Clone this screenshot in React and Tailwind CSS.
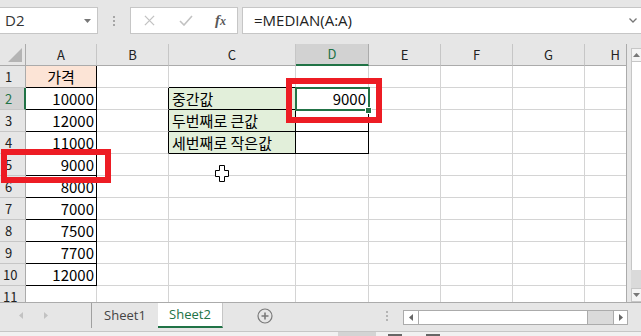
const COLS = [
    { id: 'A', w: 'w-[71px]' },
    { id: 'B', w: 'w-[72px]' },
    { id: 'C', w: 'w-[127px]' },
    { id: 'D', w: 'w-[73px]' },
    { id: 'E', w: 'w-[72px]' },
    { id: 'F', w: 'w-[72px]' },
    { id: 'G', w: 'w-[72px]' },
    { id: 'H', w: 'w-[42px]' },
];

const ROWS = [1, 2, 3, 4, 5, 6, 7, 8, 9, 10, 11];

const VALUES = {
    A1: '가격', A2: '10000', A3: '12000', A4: '11000', A5: '9000',
    A6: '8000', A7: '7000', A8: '7500', A9: '7700', A10: '12000',
    C2: '중간값', C3: '두번째로 큰값', C4: '세번째로 작은값', D2: '9000',
};

const BOXED = new Set(['A1', 'A2', 'A3', 'A4', 'A5', 'A6', 'A7', 'A8', 'A9', 'A10', 'C2', 'C3', 'C4', 'D2', 'D3', 'D4']);

const FILL = { A1: 'bg-[#fce4d6]', C2: 'bg-[#e2efda]', C3: 'bg-[#e2efda]', C4: 'bg-[#e2efda]' };

const UI_FONT = "font-['Open_Sans','Noto_Sans',sans-serif]";

function Cell({ col, nextCol, row }) {
    const id = col.id + row;
    const v = VALUES[id];
    const boxed = BOXED.has(id);
    const right = boxed || (nextCol && BOXED.has(nextCol.id + row)) ? 'border-r-black' : 'border-r-[#d4d4d4]';
    const bottom = boxed || BOXED.has(col.id + (row + 1)) ? 'border-b-black' : 'border-b-[#d4d4d4]';
    const isNum = v && /^\d+$/.test(v);
    const align = id === 'A1' ? 'justify-center' : isNum ? 'justify-end pr-[2px]' : 'justify-start pl-[3px]';
    return (
        <div className={`flex h-[22px] shrink-0 items-center whitespace-nowrap border-r border-b pt-[1px] text-[15px] text-black ${col.w} ${right} ${bottom} ${FILL[id] ?? 'bg-white'} ${align}`}>
            {v}
        </div>
    );
}

function Toolbar() {
    return (
        <div className="flex h-[44px] items-start pt-[7px]">
            <div className="flex h-[27px] w-[98px] items-center justify-between border border-l-0 border-[#c6c6c6] bg-white pl-[5px] pr-[6px]">
                <span className="text-[15px] text-[#333]">D2</span>
                <svg viewBox="0 0 7 4" className="h-[4px] w-[7px]"><path d="M0 0h7L3.5 4z" fill="#777" /></svg>
            </div>
            <div className="flex h-[27px] w-[32px] flex-col items-center justify-center gap-[2px]">
                <span className="h-[2px] w-[2px] bg-[#a6a6a6]" />
                <span className="h-[2px] w-[2px] bg-[#a6a6a6]" />
                <span className="h-[2px] w-[2px] bg-[#a6a6a6]" />
            </div>
            <div className="flex h-[27px] w-[108px] items-center border border-[#c6c6c6] bg-white">
                <svg viewBox="0 0 12 12" className="ml-[13px] h-[11px] w-[11px]"><path d="M1 1l10 10M11 1L1 11" stroke="#c2c2c2" strokeWidth="1.4" /></svg>
                <svg viewBox="0 0 14 11" className="ml-[24px] h-[11px] w-[14px]"><path d="M1 6l4 4 8-9" stroke="#c2c2c2" strokeWidth="1.6" fill="none" /></svg>
                <span className="ml-[22px] font-['Liberation_Serif',serif] text-[15px] font-bold italic leading-none text-[#595959]">f<span className="text-[12px]">x</span></span>
            </div>
            <div className="ml-[4px] flex h-[27px] flex-1 items-center justify-between border border-r-0 border-[#c6c6c6] bg-white pl-[11px] pr-[4px]">
                <span className="text-[15px] text-[#222]">=MEDIAN(A:A)</span>
                <svg viewBox="0 0 8 5" className="h-[5px] w-[8px]"><path d="M0.5 0.5l3.5 3.5 3.5-3.5" stroke="#777" strokeWidth="1.3" fill="none" /></svg>
            </div>
        </div>
    );
}

function Grid() {
    return (
        <div className="w-[627px] overflow-hidden border-r border-[#ababab] bg-white">
            <div className="flex h-[22px] bg-[#e6e6e6]">
                <div className="flex h-[22px] w-[26px] shrink-0 items-end justify-end border-r border-b border-[#ababab] pb-[3px] pr-[3px]">
                    <svg viewBox="0 0 14 14" className="h-[14px] w-[14px]"><path d="M14 0v14H0z" fill="#b4b4b4" /></svg>
                </div>
                {COLS.map((c) =>
                    c.id === 'D' ? (
                        <div key={c.id} className={`flex h-[22px] shrink-0 items-center justify-center border-r border-r-[#ababab] border-b-2 border-b-[#217346] bg-[#d2d2d2] text-[13px] text-[#217346] ${c.w}`}>{c.id}</div>
                    ) : (
                        <div key={c.id} className={`flex h-[22px] shrink-0 items-center justify-center border-r border-b border-r-[#c6c6c6] border-b-[#ababab] text-[13px] text-[#222] ${c.w} ${c.id === 'H' ? 'justify-end pr-[6px]' : ''}`}>{c.id}</div>
                    )
                )}
            </div>
            {ROWS.map((r) => (
                <div key={r} className="flex h-[22px]">
                    {r === 2 ? (
                        <div className="flex h-[22px] w-[26px] shrink-0 items-center border-r-2 border-b border-r-[#217346] border-b-[#c6c6c6] bg-[#d2d2d2] pl-[5px] text-[13px] text-[#217346]">{r}</div>
                    ) : (
                        <div className={`flex h-[22px] w-[26px] shrink-0 items-center border-r border-b border-r-[#ababab] border-b-[#c6c6c6] bg-[#e6e6e6] text-[13px] text-[#222] ${r >= 10 ? 'pl-[3px]' : 'pl-[5px]'}`}>{r}</div>
                    )}
                    {COLS.map((c, i) => (
                        <Cell key={c.id} col={c} nextCol={COLS[i + 1]} row={r} />
                    ))}
                </div>
            ))}
        </div>
    );
}

function VScroll() {
    return (
        <div className="flex w-[14px] flex-col items-end pt-[4px] pb-0">
            <div className="flex h-[14px] w-[10px] items-center justify-center border border-r-0 border-[#c6c6c6] bg-[#f4f4f4]">
                <svg viewBox="0 0 7 4" className="h-[4px] w-[7px]"><path d="M0 4h7L3.5 0z" fill="#777" /></svg>
            </div>
            <div className="h-[208px] w-[10px] border-l border-[#c6c6c6] bg-white" />
            <div className="flex-1 w-[10px] bg-[#dadada]" />
            <div className="flex h-[14px] w-[10px] items-center justify-center border border-r-0 border-[#c6c6c6] bg-[#f4f4f4]">
                <svg viewBox="0 0 7 4" className="h-[4px] w-[7px]"><path d="M0 0h7L3.5 4z" fill="#777" /></svg>
            </div>
        </div>
    );
}

function TabBar() {
    return (
        <div className="flex h-[29px] items-start border-t border-[#ababab] bg-[#e6e6e6]">
            <div className="flex h-[25px] w-[92px] items-center border-r border-[#a0a0a0] pl-[19px] gap-[21px]">
                <svg viewBox="0 0 4 7" className="h-[7px] w-[4px]"><path d="M4 0v7L0 3.5z" fill="#c2c2c2" /></svg>
                <svg viewBox="0 0 4 7" className="h-[7px] w-[4px]"><path d="M0 0v7l4-3.5z" fill="#c2c2c2" /></svg>
            </div>
            <div className="flex h-[25px] w-[66px] items-center justify-center text-[13px] text-[#444]">Sheet1</div>
            <div className="flex h-[25px] w-[65px] items-center justify-center border-r border-b-2 border-r-[#c6c6c6] border-b-[#217346] bg-white text-[13px] text-[#217346]">Sheet2</div>
            <div className="flex h-[25px] w-[84px] items-center justify-center">
                <svg viewBox="0 0 16 16" className="h-[16px] w-[16px]">
                    <circle cx="8" cy="8" r="7" stroke="#7a7a7a" strokeWidth="1.2" fill="none" />
                    <path d="M8 4.5v7M4.5 8h7" stroke="#7a7a7a" strokeWidth="1.6" />
                </svg>
            </div>
            <div className="flex h-[25px] w-[96px] flex-col items-start justify-center gap-[2px] pl-[79px]">
                <span className="h-[2px] w-[2px] bg-[#b4b4b4]" />
                <span className="h-[2px] w-[2px] bg-[#b4b4b4]" />
                <span className="h-[2px] w-[2px] bg-[#b4b4b4]" />
            </div>
            <div className="mt-[7px] flex h-[15px] w-[225px] border border-[#ababab] bg-[#dadada]">
                <div className="flex w-[15px] items-center justify-center border-r border-[#ababab] bg-white">
                    <svg viewBox="0 0 4 7" className="h-[7px] w-[4px]"><path d="M4 0v7L0 3.5z" fill="#666" /></svg>
                </div>
                <div className="w-[169px] border-r border-[#ababab] bg-white" />
                <div className="flex-1" />
                <div className="flex w-[14px] items-center justify-center border-l border-[#ababab] bg-white">
                    <svg viewBox="0 0 4 7" className="h-[7px] w-[4px]"><path d="M0 0v7l4-3.5z" fill="#666" /></svg>
                </div>
            </div>
        </div>
    );
}

function StatusStrip() {
    return (
        <div className="flex h-[5px] border-t border-[#c6c6c6] bg-[#f1f1f1]">
            <div className="ml-[338px] w-[38px] bg-[#d4d4d4]" />
            <div className="ml-[12px] mt-[2px] h-[2px] w-[14px] bg-[#666]" />
            <div className="ml-[24px] mt-[2px] h-[2px] w-[14px] bg-[#666]" />
        </div>
    );
}

export default function App() {
    return (
        <div className={`relative h-[336px] w-[641px] overflow-hidden bg-[#e6e6e6] ${UI_FONT}`}>
            <Toolbar />
            <div className="flex h-[258px] overflow-hidden font-['Noto_Sans_CJK_KR',sans-serif]">
                <Grid />
                <VScroll />
            </div>
            <TabBar />
            <StatusStrip />

            {/* selection + fill handle */}
            <div className="absolute left-[295px] top-[87px] h-[24px] w-[75px] border-2 border-[#217346]" />
            <div className="absolute left-[365px] top-[107px] h-[7px] w-[7px] border border-white bg-[#217346]" />

            {/* red highlight boxes */}
            <div className="absolute left-[1px] top-[149px] h-[34px] w-[110px] border-[6px] border-[#ed1c24]" />
            <div className="absolute left-[286px] top-[78px] h-[45px] w-[96px] border-[6px] border-[#ed1c24]" />

            {/* cell cursor */}
            <svg viewBox="0 0 14 17" className="absolute left-[215px] top-[165px] h-[17px] w-[14px]">
                <path d="M4.5 0.5h5v5h4v6h-4v5h-5v-5h-4v-6h4z" fill="#fff" stroke="#000" strokeWidth="1" />
            </svg>
        </div>
    );
}
